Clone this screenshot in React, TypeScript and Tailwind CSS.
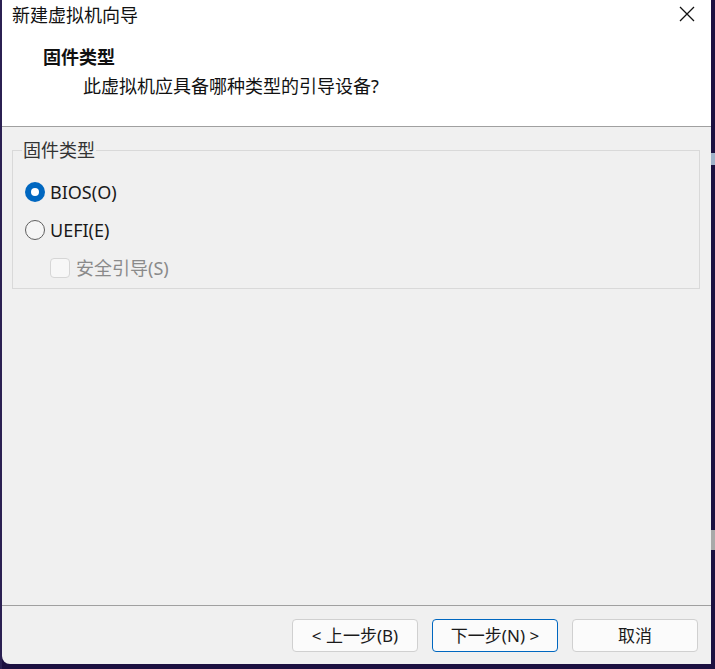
import React, { useState } from 'react';

const SANS = "font-['Segoe_UI','Noto_Sans','Noto_Sans_CJK_SC',sans-serif]";

const Radio: React.FC<{ checked: boolean; label: string; onClick: () => void }> = ({ checked, label, onClick }) => (
  <button onClick={onClick} className="flex items-center gap-[5px] h-[22px] text-left">
    {checked ? (
      <span className="w-[20px] h-[20px] rounded-full bg-[#0067c0] flex items-center justify-center">
        <span className="w-[8px] h-[8px] rounded-full bg-white"></span>
      </span>
    ) : (
      <span className="w-[20px] h-[20px] rounded-full border border-[#5f5f5f] bg-[#f5f5f5]"></span>
    )}
    <span className="text-[18px] text-[#1a1a1a] leading-none">{label}</span>
  </button>
);

const DialogButton: React.FC<{ label: string; primary?: boolean }> = ({ label, primary }) => (
  <button
    className={`w-[126px] h-[33px] rounded-[4px] bg-[#fbfbfb] text-[17px] text-[#1a1a1a] flex items-center justify-center ${
      primary ? 'border border-[#0067c0]' : 'border border-[#d0d0d0]'
    }`}
  >
    {label}
  </button>
);

export default function App() {
  const [fw, setFw] = useState<'bios' | 'uefi'>('bios');

  return (
    <div className={`w-[715px] h-[669px] bg-[#1c1040] flex overflow-hidden ${SANS}`}>
      <div className="w-[2px] h-full bg-[#2b2052]"></div>

      {/* dialog */}
      <div className="w-[709px] h-[664px] bg-[#f0f0f0] rounded-bl-[8px] flex flex-col overflow-hidden">
        {/* header */}
        <div className="h-[126px] bg-white flex flex-col">
          <div className="h-[30px] flex items-center justify-between pl-[10px] pr-[16px]">
            <span className="text-[18px] text-[#111]">新建虚拟机向导</span>
            <svg width="16" height="16" viewBox="0 0 16 16" className="mt-[-2px]">
              <path d="M1 1 L15 15 M15 1 L1 15" stroke="#111" strokeWidth="1.3" fill="none" />
            </svg>
          </div>
          <div className="pl-[41px] pt-[18px] text-[18px] font-bold text-[#111] leading-none">固件类型</div>
          <div className="pl-[81px] pt-[11px] text-[18px] text-[#111] leading-none">此虚拟机应具备哪种类型的引导设备?</div>
        </div>
        <div className="h-px bg-[#a0a0a0]"></div>

        {/* body */}
        <div className="flex-1 px-[10px] pt-[24px]">
          <fieldset className="w-[688px] h-[148px] border border-[#d9d9d9] pl-[12px] pt-[14px] mt-[-10px]">
            <legend className="px-[1px] ml-[-3px] text-[18px] text-[#333] leading-none">固件类型</legend>
            <div className="flex flex-col gap-[16px] pt-[8px]">
              <Radio checked={fw === 'bios'} label="BIOS(O)" onClick={() => setFw('bios')} />
              <Radio checked={fw === 'uefi'} label="UEFI(E)" onClick={() => setFw('uefi')} />
              <div className="flex items-center gap-[6px] pl-[25px] h-[22px]">
                <span className="w-[20px] h-[20px] rounded-[4px] border border-[#d6d6d6] bg-[#f7f7f7]"></span>
                <span className="text-[18px] text-[#8a8a8a] leading-none">安全引导(S)</span>
              </div>
            </div>
          </fieldset>
        </div>

        {/* footer */}
        <div className="h-px bg-[#a0a0a0]"></div>
        <div className="h-[58px] flex items-start justify-end gap-[14px] pt-[13px] pr-[13px]">
          <DialogButton label="< 上一步(B)" />
          <DialogButton label="下一步(N) >" primary />
          <DialogButton label="取消" />
        </div>
      </div>

      <div className="flex-1 relative">
        <div className="absolute top-[153px] left-0 w-full h-[12px] bg-[#9fb2c9]"></div>
        <div className="absolute top-[530px] left-0 w-full h-[20px] bg-[#a9a9a9]"></div>
      </div>
    </div>
  );
}
